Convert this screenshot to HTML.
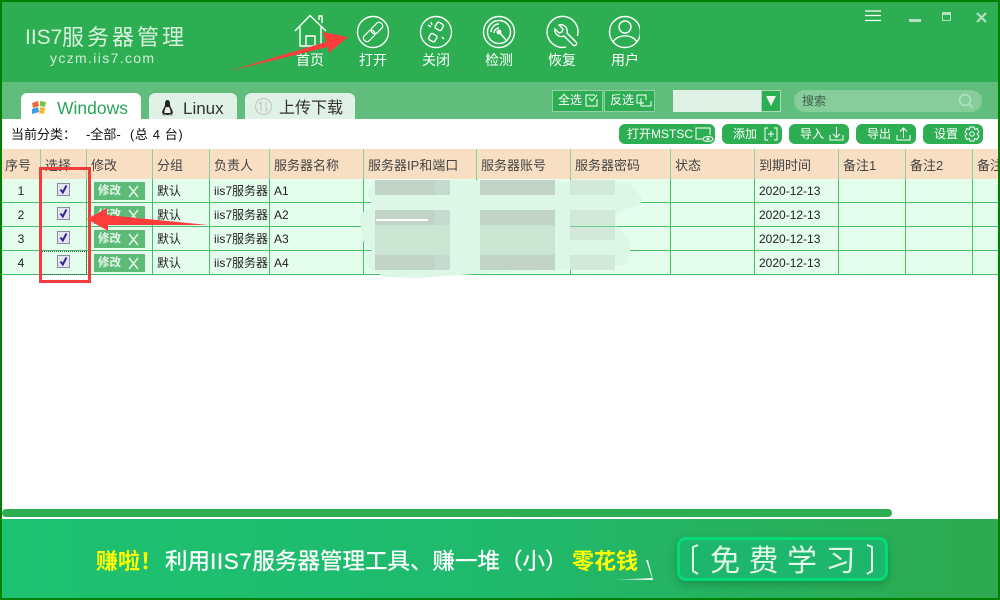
<!DOCTYPE html>
<html lang="zh"><head><meta charset="utf-8"><title>IIS7服务器管理</title>
<style>
*{box-sizing:border-box}
html,body{margin:0;padding:0;width:1000px;height:600px;overflow:hidden;background:#fff}
body{position:relative;font-family:"Liberation Sans","Noto Sans CJK SC",sans-serif;font-size:12px;color:#222}
.a{position:absolute}
.nav{position:absolute;top:52px;width:60px;text-align:center;color:#fff;font-size:14px;line-height:16px}
.tab{position:absolute;top:93px;height:26px;border-radius:6px 6px 0 0;background:#e0f1e5;font-size:16px;line-height:31px;color:#333}
.sel{position:absolute;top:90px;height:22px;width:51px;background:#2eae52;border:1px solid #8fd0a3;color:#fff;font-size:12px;line-height:18px;padding-left:5px}
.btn{position:absolute;top:124px;height:20px;width:60px;background:#2eae52;border-radius:6px;color:#fff;font-size:12px;line-height:20px;padding-left:11px}
.btn svg{position:absolute;top:2px}
table{position:absolute;left:2px;top:149px;border-collapse:separate;border-spacing:0;table-layout:fixed;width:1012px}
th{height:30px;background:#f8dfc3;font-weight:400;font-size:13px;color:#444;text-align:left;padding:0 0 0 4px;border-right:1px solid #8fcf9d;white-space:nowrap;overflow:hidden}
td{height:24px;background:#e5fdec;padding:0 0 0 4px;border-right:1px solid #46bf6b;border-bottom:1px solid #46bf6b;white-space:nowrap;overflow:hidden;font-size:12px;color:#222}
td.c{text-align:center;padding:0}
.cb{display:block;width:13px;height:13px;margin:0 auto;position:relative;top:-1px}
.m{display:block;width:51px;height:18px;background:#5dbb77;color:#e8f7ec;font-weight:700;font-size:11.5px;line-height:18px;padding-left:4px;position:relative;margin-left:3px}
.m svg{position:absolute;left:33px;top:3px}
</style></head>
<body>
<!-- header -->
<div class="a" style="left:0;top:0;width:1000px;height:82px;background:#2eae52"></div>
<div class="a" style="left:0;top:82px;width:1000px;height:37px;background:#60bd7c"></div>

<div class="a" style="left:25px;top:23px;font-size:21px;line-height:30px;color:#d8f2de;white-space:nowrap">IIS7</div>
<div class="a" style="left:62px;top:23px;font-size:22px;line-height:30px;color:#d8f2de;letter-spacing:3px;white-space:nowrap">服务器管理</div>
<div class="a" style="left:50px;top:50px;font-size:14px;line-height:16px;color:#cfeed7;letter-spacing:1.35px;white-space:nowrap">yczm.iis7.com</div>

<svg class="a" style="left:290px;top:10px" width="350" height="44" viewBox="290 10 350 44" fill="none" stroke="#fff" stroke-width="1.4">
<path d="M295 31L310 15.500L326 31M300 27V46H321V27M306 46V36H315V46M319 20V16H322V23"/>
<circle cx="373" cy="32" r="15.500"/>
<g transform="translate(373 32) rotate(45)" stroke-width="1.200"><rect x="-3.500" y="-12" width="7" height="13" rx="3"/><rect x="-3.500" y="-1" width="7" height="13" rx="3"/></g>
<circle cx="436" cy="32" r="15.500"/>
<g transform="translate(436 32) rotate(30)"><rect x="-3.500" y="-10" width="7" height="7" rx="1.500"/><rect x="-3.500" y="3" width="7" height="7" rx="1.500"/></g><path d="M428 25l3 2M431 22l1 3M442 37l2 2"/>
<circle cx="499" cy="32" r="15.500"/><circle cx="499" cy="32" r="11.500"/><path d="M491 32a8 8 0 0 1 8-8M494 33a5 5 0 0 1 5-5"/><circle cx="499" cy="32" r="1.800" fill="#fff"/><path d="M500 33l6 7"/>
<path d="M577.500 36A15.500 15.500 0 1 0 566 47"/>
<path d="M555 29l4 4 3-1 1-3-4-4a6.500 6.500 0 0 1 8 8l9 9a2 2 0 0 1-3 3l-9-9a6.500 6.500 0 0 1-9-7z"/>
<circle cx="625" cy="32" r="15.500"/><circle cx="625" cy="27" r="6"/><path d="M613 42a13 10 0 0 1 24 0"/>
</svg>

<div class="nav" style="left:280px">首页</div>
<div class="nav" style="left:343px">打开</div>
<div class="nav" style="left:406px">关闭</div>
<div class="nav" style="left:469px">检测</div>
<div class="nav" style="left:532px">恢复</div>
<div class="nav" style="left:595px">用户</div>

<!-- window controls -->
<svg class="a" style="left:860px;top:5px" width="135" height="22" viewBox="860 5 135 22" fill="none">
<path d="M865 11H881M865 15.500H881M865 20.500H881" stroke="#fff" stroke-width="1.300"/>
<rect x="909" y="19" width="12" height="3" fill="#b5e0c2"/>
<rect x="942.500" y="12.500" width="8" height="8" stroke="#b5e0c2"/><rect x="942" y="12" width="9" height="3" fill="#b5e0c2"/>
<path d="M977 13L986 22M986 13L977 22" stroke="#b5e0c2" stroke-width="2.200"/>
</svg>

<!-- tabs -->
<div class="tab" style="left:21px;width:120px;background:#fff;color:#2aa35a;font-size:17.500px;padding-left:36px">Windows</div>
<svg class="a" style="left:31px;top:99px" width="17" height="17" viewBox="0 0 17 17"><path d="M1 4l6-2 1 5-6 2z" fill="#ef6a3a"/><path d="M9 2l6 1-1 5-5-1z" fill="#7cc04a"/><path d="M1 10l6-2 1 5-7 2z" fill="#3aa0e8"/><path d="M9 8l5 1-1 6-5-1z" fill="#f6b82e"/></svg>
<div class="tab" style="left:149px;width:88px;padding-left:34px;font-size:17px">Linux</div>
<svg class="a" style="left:160px;top:99px" width="15" height="17" viewBox="0 0 15 17"><path d="M7.500 1C5 1 5 4 5 6c0 2-3 5-3 8l3 2h5l3-2c0-3-3-6-3-8 0-2 0-5-2.500-5z" fill="#222"/><path d="M6 8c-1 2-2 4-1.500 6h6C11 12 10 10 9 8z" fill="#eee"/><path d="M2 15h4v1.500H3zM9 15h4l-1 1.500H9z" fill="#888"/></svg>
<div class="tab" style="left:245px;width:110px;padding-left:34px">上传下载</div>
<svg class="a" style="left:254px;top:97px" width="19" height="19" viewBox="0 0 19 19" fill="none" stroke="#c4cdc7" stroke-width="1.300"><circle cx="9.500" cy="9.500" r="8"/><path d="M7 14V5L5 7M12 5v9l2-2"/></svg>

<div class="sel" style="left:552px">全选</div>
<div class="sel" style="left:604px">反选</div>
<svg class="a" style="left:584px;top:93px" width="72" height="16" viewBox="0 0 72 16" fill="none" stroke="#fff"><path d="M11 2H2V13H13V6"/><path d="M5 5l3 3 5-6"/><path d="M53 2H62V7M53 2V10H60M57 5V13H67V8"/></svg>
<div class="a" style="left:673px;top:90px;width:108px;height:22px;background:#dff1e5;border-right:1px solid #a8dab7"></div>
<div class="a" style="left:761px;top:90px;width:20px;height:22px;background:#2eae52;border:1px solid #a8dab7;color:#fff"></div>
<svg class="a" style="left:766px;top:96px" width="10" height="10"><path d="M0 0H10L5 10z" fill="#e8f6ec"/></svg>
<div class="a" style="left:794px;top:90px;width:188px;height:22px;border-radius:11px;background:#86cd9a;color:#3f5f4a;font-size:12px;line-height:23px;padding-left:8px">搜索</div>
<svg class="a" style="left:958px;top:93px" width="17" height="17" fill="none" stroke="#b6e2c4" stroke-width="1.500"><circle cx="7" cy="7" r="5.500"/><path d="M11 11l4 4"/></svg>

<!-- toolbar -->
<div class="a" style="left:11px;top:126px;font-size:13px;line-height:18px;color:#111;white-space:nowrap">当前分类：</div>
<div class="a" style="left:86px;top:126px;font-size:13px;line-height:18px;color:#111;white-space:nowrap">-全部-</div>
<div class="a" style="left:130px;top:126px;font-size:13px;line-height:18px;color:#111;letter-spacing:.6px;white-space:nowrap">(总 4 台)</div>
<div class="btn" style="left:619px;width:96px;padding-left:8px">打开MSTSC<svg style="left:76px" width="20" height="17" fill="none" stroke="#fff"><path d="M7 13H1V2H15V9"/><ellipse cx="13" cy="13" rx="5" ry="2.500"/><circle cx="13" cy="13" r="1" fill="#fff"/></svg></div>
<div class="btn" style="left:722px">添加<svg style="left:42px" width="15" height="16" fill="none" stroke="#fff"><path d="M4 2H1V14H4M10 2H13V14H10M4 8H10M7 5V11"/></svg></div>
<div class="btn" style="left:789px">导入<svg style="left:40px" width="16" height="16" fill="none" stroke="#fff"><path d="M1 9V14H14V9M7.500 1V11M4 8l3.500 3.500L11 8"/></svg></div>
<div class="btn" style="left:856px">导出<svg style="left:40px" width="16" height="16" fill="none" stroke="#fff"><path d="M1 9V14H14V9M7.500 12V2M4 5.500L7.500 2 11 5.500"/></svg></div>
<div class="btn" style="left:923px">设置<svg style="left:41px" width="16" height="16" fill="none" stroke="#fff"><path d="M6 1H10L10.500 3.500 13 2.500 15 6 13 8 15 10 13 13.500 10.500 12.500 10 15H6L5.500 12.500 3 13.500 1 10 3 8 1 6 3 2.500 5.500 3.500z"/><circle cx="8" cy="8" r="2.200"/></svg></div>

<!-- table -->
<div class="a" style="left:2px;top:149px;width:996px;height:130px;overflow:hidden">
<table style="left:0;top:0">
<colgroup><col style="width:39px"><col style="width:46px"><col style="width:66px"><col style="width:57px"><col style="width:60px"><col style="width:94px"><col style="width:113px"><col style="width:94px"><col style="width:100px"><col style="width:84px"><col style="width:84px"><col style="width:67px"><col style="width:67px"><col style="width:41px"></colgroup>
<tr><th style="padding-left:3px">序号</th><th>选择</th><th>修改</th><th>分组</th><th>负责人</th><th>服务器名称</th><th>服务器IP和端口</th><th>服务器账号</th><th>服务器密码</th><th>状态</th><th>到期时间</th><th>备注1</th><th>备注2</th><th>备注3</th></tr>
<tr><td class="c">1</td><td class="c"><svg class="cb" viewBox="0 0 13 13"><rect x=".5" y=".5" width="12" height="12" fill="#e6e6f0" stroke="#8b8b9b"/><path d="M3.500 6.500L5.800 9.500 9.500 2.500" fill="none" stroke="#2b2f8c" stroke-width="2"/></svg></td><td><span class="m">修改<svg width="13" height="13" fill="none" stroke="#e8f7ec" stroke-width="1.500"><path d="M2 1L11 12M11 1L2 12"/></svg></span></td><td>默认</td><td>iis7服务器</td><td>A1</td><td></td><td></td><td></td><td></td><td>2020-12-13</td><td></td><td></td><td></td></tr>
<tr><td class="c">2</td><td class="c"><svg class="cb" viewBox="0 0 13 13"><rect x=".5" y=".5" width="12" height="12" fill="#e6e6f0" stroke="#8b8b9b"/><path d="M3.500 6.500L5.800 9.500 9.500 2.500" fill="none" stroke="#2b2f8c" stroke-width="2"/></svg></td><td><span class="m">修改<svg width="13" height="13" fill="none" stroke="#e8f7ec" stroke-width="1.500"><path d="M2 1L11 12M11 1L2 12"/></svg></span></td><td>默认</td><td>iis7服务器</td><td>A2</td><td></td><td></td><td></td><td></td><td>2020-12-13</td><td></td><td></td><td></td></tr>
<tr><td class="c">3</td><td class="c"><svg class="cb" viewBox="0 0 13 13"><rect x=".5" y=".5" width="12" height="12" fill="#e6e6f0" stroke="#8b8b9b"/><path d="M3.500 6.500L5.800 9.500 9.500 2.500" fill="none" stroke="#2b2f8c" stroke-width="2"/></svg></td><td><span class="m">修改<svg width="13" height="13" fill="none" stroke="#e8f7ec" stroke-width="1.500"><path d="M2 1L11 12M11 1L2 12"/></svg></span></td><td>默认</td><td>iis7服务器</td><td>A3</td><td></td><td></td><td></td><td></td><td>2020-12-13</td><td></td><td></td><td></td></tr>
<tr><td class="c">4</td><td class="c" style="outline:1px dotted #2f5f3f;outline-offset:-1px"><svg class="cb" viewBox="0 0 13 13"><rect x=".5" y=".5" width="12" height="12" fill="#e6e6f0" stroke="#8b8b9b"/><path d="M3.500 6.500L5.800 9.500 9.500 2.500" fill="none" stroke="#2b2f8c" stroke-width="2"/></svg></td><td><span class="m">修改<svg width="13" height="13" fill="none" stroke="#e8f7ec" stroke-width="1.500"><path d="M2 1L11 12M11 1L2 12"/></svg></span></td><td>默认</td><td>iis7服务器</td><td>A4</td><td></td><td></td><td></td><td></td><td>2020-12-13</td><td></td><td></td><td></td></tr>
</table></div>

<!-- mosaic -->
<svg class="a" style="left:355px;top:175px" width="295" height="110" viewBox="355 175 295 110">
<path d="M375 180H460L560 182 630 183 642 198 640 205 617 212 615 225 630 240 630 255 627 265 560 270 500 272 420 278 385 277 368 268 365 258 372 250 362 240 360 215 372 205 367 192z" fill="#dcf7e5"/>
<g fill="#c2d4c7">
<rect x="375" y="180" width="60" height="15"/><rect x="435" y="180" width="15" height="15" fill="#c4dcd0"/>
<rect x="375" y="210" width="60" height="15"/><rect x="435" y="210" width="15" height="15" fill="#c4dcd0"/>
<rect x="375" y="255" width="60" height="15"/><rect x="435" y="255" width="15" height="15" fill="#c4dcd0"/>
<rect x="480" y="180" width="75" height="15"/><rect x="480" y="210" width="75" height="15"/><rect x="480" y="255" width="75" height="15"/>
</g>
<g fill="#cbe5d3">
<rect x="375" y="225" width="75" height="30"/><rect x="480" y="225" width="75" height="30"/>
</g>
<g fill="#d2e9da">
<rect x="570" y="180" width="45" height="15"/><rect x="570" y="210" width="45" height="15"/><rect x="570" y="225" width="45" height="15"/><rect x="570" y="255" width="45" height="15"/>
</g>
<rect x="570" y="226" width="46" height="1" fill="#6fd08c"/>
<path d="M376 219H428L428 221H376z" fill="#fff"/>
</svg>

<!-- annotations -->
<div class="a" style="left:39px;top:167px;width:52px;height:116px;border:3px solid #f23c3c"></div>
<svg class="a" style="left:0;top:0" width="400" height="240" fill="#fd3c3c"><path d="M229 71L326 42 323 32 348 37 329 53 328 47z"/><path d="M87 219L107 208 107 215 208 225 108 225 108 231z"/></svg>

<!-- scrollbar + banner -->
<div class="a" style="left:2px;top:509px;width:890px;height:8px;border-radius:4px;background:#2eae52"></div>
<div class="a" style="left:0;top:519px;width:1000px;height:81px;background:linear-gradient(90deg,#1dc271 0%,#1fb96c 50%,#2eaa50 100%)"></div>
<div class="a" style="left:96px;top:548px;font-size:22px;line-height:28px;color:#ff0;white-space:nowrap;font-weight:700">赚啦！</div>
<div class="a" style="left:165px;top:548px;font-size:22.500px;line-height:28px;color:#fff;white-space:nowrap;-webkit-text-stroke:.3px #fff">利用<span style="letter-spacing:.6px">IIS7</span>服务器管理工具、赚一堆（小）</div>
<div class="a" style="left:572px;top:548px;font-size:22px;line-height:28px;color:#ff0;white-space:nowrap;font-weight:700">零花钱</div>
<svg class="a" style="left:605px;top:558px" width="50" height="24"><defs><linearGradient id="g"><stop offset="0" stop-color="#fff" stop-opacity="0"/><stop offset="1" stop-color="#fff"/></linearGradient></defs><path d="M2 22L47 20 41 2 43 2 48 22z" fill="url(#g)"/></svg>
<div class="a" style="left:677px;top:537px;width:211px;height:44px;border:3px solid #04da75;border-radius:9px;background:#1cb76c;box-shadow:0 3px 8px rgba(0,80,40,.35)"></div>
<div class="a" style="left:710px;top:544px;font-size:30px;line-height:36px;letter-spacing:8.500px;color:#e4f8ea;white-space:nowrap">免费学习</div>
<svg class="a" style="left:688px;top:543px" width="190" height="34" fill="none" stroke="#e4f8ea" stroke-width="2"><path d="M10 2L5 4V28L10 31"/><path d="M179 2L184 4V28L179 31"/></svg>

<!-- frame -->
<div class="a" style="left:0;top:0;width:1000px;height:600px;border:2px solid #008000"></div>
</body></html>
